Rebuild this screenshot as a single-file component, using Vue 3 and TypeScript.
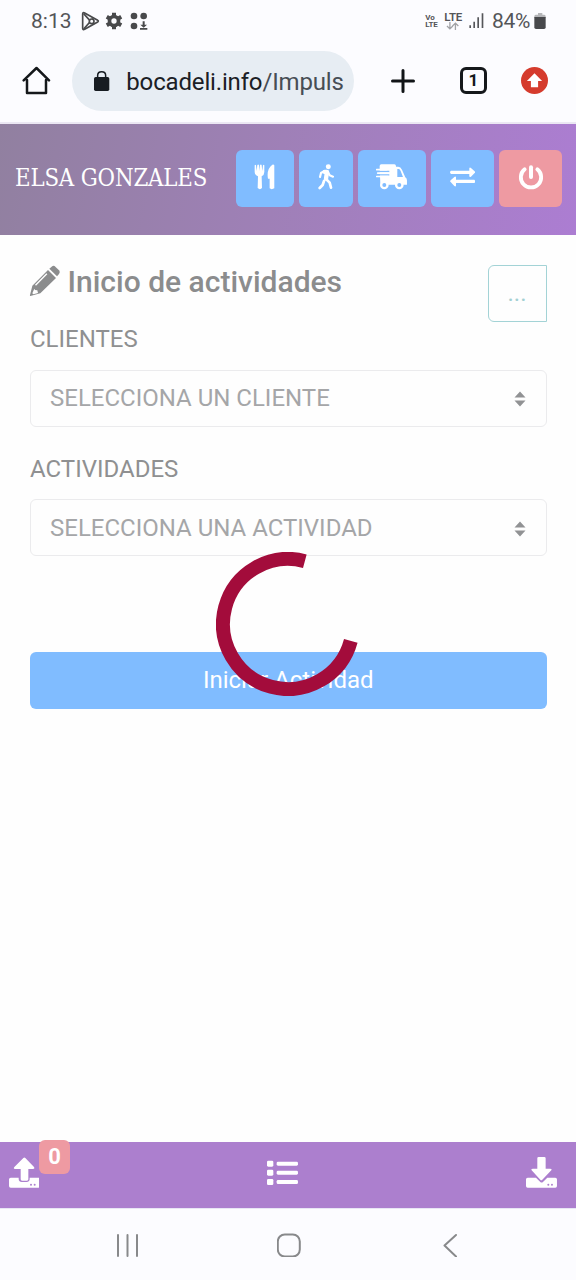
<script setup lang="ts">
import { ref } from 'vue'

interface Field {
  label: string
  placeholder: string
}

const userName = ref('ELSA GONZALES')
const pending = ref(0)
const fields: Field[] = [
  { label: 'CLIENTES', placeholder: 'SELECCIONA UN CLIENTE' },
  { label: 'ACTIVIDADES', placeholder: 'SELECCIONA UNA ACTIVIDAD' },
]
</script>

<template>
  <div class="phone">
    <div class="status">
      <span class="clock">8:13</span>
      <svg class="status-left" viewBox="240 30 210 66" width="70" height="22">
        <g fill="none" stroke="#48494b" stroke-width="5" stroke-linejoin="round">
          <path d="M248 42q0-6 6-3l39 22q4 2 0 5l-39 22q-6 3-6-3z" />
          <path d="M251 41l28 31M251 87l28-31" />
          <circle cx="275" cy="64" r="7" fill="#fcfcff" />
        </g>
        <g fill="none" stroke="#48494b">
          <circle cx="342" cy="63" r="13.500" stroke-width="11" />
          <path d="M342 38v10M342 78v10M320.300 50.500l8.700 5M355 70.500l8.700 5M320.300 75.500l8.700-5M355 55.500l8.700-5" stroke-width="12" />
        </g>
        <g fill="#48494b">
          <circle cx="402" cy="48" r="10" />
          <circle cx="431" cy="48" r="10" />
          <circle cx="402" cy="78" r="10" />
          <path d="M428 64h6v10h7l-10 9-10-9h7zM420 84h22v5h-22z" />
        </g>
      </svg>
      <span class="grow"></span>
      <span class="volte"><span>Vo</span><span>LTE</span></span>
      <span class="lte">
        <span>LTE</span>
        <svg viewBox="0 0 40 24" width="13" height="8" fill="none" stroke="#a2a3a6" stroke-width="4">
          <path d="M12 0v20M3 12l9 9 9-9M29 24V4M20 12l9-9 9 9" />
        </svg>
      </span>
      <svg class="signal" viewBox="540 36 50 52" width="16.700" height="17.300" fill="#55565a">
        <path d="M544 76h5v8h-5zM556 65h5v19h-5zM568 52h5v32h-5zM581 40h5v44h-5z" />
      </svg>
      <span class="percent">84%</span>
      <svg class="battery" viewBox="736 36 36 54" width="12" height="18">
        <path d="M748 39h13v5h6q4 0 4 5v5h-34v-5q0-5 4-5h7z" fill="#b5b6b9" />
        <path d="M737 51h34v31q0 5-5 5h-24q-5 0-5-5z" fill="#48494c" />
      </svg>
    </div>

    <div class="browser">
      <svg class="home" viewBox="66 198 87 87" width="29" height="29" fill="none" stroke="#15181b" stroke-width="7.500" stroke-linejoin="round" stroke-linecap="round">
        <path d="M81 240v39h57v-39M71 241l38.500-37L147 241" />
      </svg>
      <div class="pill">
        <svg viewBox="280 208 52 66" width="17.300" height="22">
          <rect x="283" y="229" width="46" height="42" rx="5" fill="#171c21" />
          <path d="M294 231v-7q0-11 12-11t12 11v7" fill="none" stroke="#171c21" stroke-width="4.500" />
        </svg>
        <div class="url">bocadeli.info<span>/Impuls</span></div>
      </div>
      <svg class="plus" viewBox="0 0 24 24" width="24" height="24" stroke="#111417" stroke-width="3" stroke-linecap="round">
        <path d="M1.500 12h21M12 1.500v21" />
      </svg>
      <span class="tabs">1</span>
      <svg class="update" viewBox="0 0 27 27" width="27" height="27">
        <circle cx="13.500" cy="13.500" r="13.500" fill="#d53b2d" />
        <path d="M13.500 6.200l7.600 7.800h-4v6.300H9.900V14h-4z" fill="#fff" />
      </svg>
    </div>

    <header class="top">
      <span class="user">{{ userName }}</span>
      <button class="tool t1">
        <svg viewBox="764 134 64 76" width="21.300" height="25.300" fill="#fff">
          <path d="M766 138q3-3 4 0l2 17 2-18q3-3 5 0l1 18 2-18q3-3 5 0l2 18 2-17q3-3 4 0v20q0 9-8 13l1 35q-6 7-13 0l1-35q-10-4-10-13zM825 138v69q-8 5-14 0v-29h-5q-5-29 13-42 4-2 6 2z" />
        </svg>
      </button>
      <button class="tool t2">
        <svg viewBox="90 134 48 76" width="16" height="25.300" fill="none" stroke="#fff" stroke-linecap="round" stroke-linejoin="round">
          <circle cx="121" cy="142" r="7.500" fill="#fff" stroke="none" />
          <path d="M110 158h7l-3 20" stroke-width="13" />
          <path d="M107 156l-8 5-3 12M120 158l5 10 10 4" stroke-width="6.500" />
          <path d="M108 185l-4 12-9 9M114 179l11 11 4 15" stroke-width="8" />
        </svg>
      </button>
      <button class="tool t3">
        <svg viewBox="266 134 94 76" width="31.300" height="25.300">
          <path d="M277 149v-9q0-5 5-5h39q5 0 5 5v2h7q7 0 11 9l10 23q5 3 5 9v13h-75q-5 0-5-5z" fill="#fff" />
          <path d="M330 149h4q4 0 6 6l7 18h-17z" fill="#80bcff" />
          <path d="M264 156.500h42M264 166.500h42" stroke="#80bcff" stroke-width="4" />
          <path d="M264 176h10" stroke="#80bcff" stroke-width="5" />
          <path d="M268 151h30M271 161.500h34M268 171.500h34" stroke="#fff" stroke-width="5" stroke-linecap="round" />
          <g fill="#80bcff" stroke="#fff" stroke-width="7">
            <circle cx="291" cy="197" r="9.500" /><circle cx="336" cy="197" r="9.500" />
          </g>
        </svg>
      </button>
      <button class="tool t4">
        <svg viewBox="486 142 76 60" width="25.300" height="20" fill="#fff">
          <path d="M489 153h55v-7q1-4 5-1l11 10q3 3 0 5l-11 11q-4 3-5-1v-7h-55q-6-5 0-10zM559 180h-55v-7q-1-4-5-1l-11 10q-3 3 0 5l11 12q4 3 5-1v-8h55q6-5 0-10z" />
        </svg>
      </button>
      <button class="tool t5 danger">
        <svg viewBox="688 132 78 78" width="26" height="26" fill="none" stroke="#fff" stroke-linecap="round">
          <path d="M708 148a30.500 30.500 0 1 0 38 0" stroke-width="11.500" />
          <path d="M727 142v29" stroke-width="12" />
        </svg>
      </button>
    </header>

    <main class="content">
      <div class="title-row">
        <svg class="pencil" viewBox="88 74 96 96" width="32" height="32" fill="#8b8c8d">
          <path fill-rule="evenodd" d="M98 136l47-47 24 24-47 46-30 8q-2 0-1-3zM104 145l-6 14 3 3 14-4-2-8-7-1zM109 136l34-34-3-3-34 34z" />
          <path d="M149 85l7-6q6-5 11 0l11 11q5 5 0 11l-6 7z" />
        </svg>
        <h5>Inicio de actividades</h5>
        <button class="more">...</button>
      </div>
      <div v-for="f in fields" :key="f.label" class="field">
        <label>{{ f.label }}</label>
        <div class="select">
          <span>{{ f.placeholder }}</span>
          <svg viewBox="0 0 12 16" width="12" height="16" fill="#919294">
            <path d="M6 .5L11.500 6.500H.5zM6 15.500L.5 9.500h11z" />
          </svg>
        </div>
      </div>
      <button class="start">Iniciar Actividad</button>
    </main>

    <footer class="bottom">
      <div class="upload">
        <svg viewBox="26 82 92 94" width="30.700" height="31.300" fill="#fff">
          <path d="M31 144h24v5q1 8 9 8h15q8 0 9-8v-5h25q5 0 5 5v20q0 5-5 5H31q-5 0-5-5v-20q0-5 5-5z" />
          <path d="M69 85q3-3 6 0l26 27q3 6-3 6H84v31q0 4-4 4H65q-4 0-4-4v-31H44q-6 0-2-6z" />
          <circle cx="92" cy="165" r="3" fill="#ac7fce" /><circle cx="103" cy="165" r="3" fill="#ac7fce" />
        </svg>
        <span class="badge">{{ pending }}</span>
      </div>
      <svg viewBox="802 90 94 76" width="31.300" height="25.300" fill="#fff">
        <g v-for="y in [92, 119, 147]" :key="y">
          <rect x="802" :y="y" width="19" height="18" rx="4" />
          <rect x="831" :y="y + 3" width="64" height="12" rx="4" />
        </g>
      </svg>
      <svg viewBox="618 82 94 94" width="31.300" height="31.300" fill="#fff">
        <path d="M623 144h25l13 13q4 3 8 0l13-13h24q5 0 5 5v20q0 5-5 5h-83q-5 0-5-5v-20q0-5 5-5z" />
        <path d="M656 82h17q4 0 4 4v31h14q6 0 3 5l-27 28q-3 3-6 0l-26-28q-3-5 3-5h14V86q0-4 4-4z" />
        <circle cx="685" cy="165" r="3" fill="#ac7fce" /><circle cx="696" cy="165" r="3" fill="#ac7fce" />
      </svg>
    </footer>

    <nav class="system">
      <svg viewBox="0 0 24 24" width="24" height="24" stroke="#88898b" stroke-width="2" stroke-linecap="round">
        <path d="M3 2v21M12.500 2v21M22 2v21" />
      </svg>
      <svg viewBox="0 0 24 24" width="24" height="24" fill="none" stroke="#88898b" stroke-width="2">
        <rect x="0.800" y="1.500" width="22" height="22" rx="7" />
      </svg>
      <svg viewBox="0 0 24 24" width="24" height="24" fill="none" stroke="#88898b" stroke-width="2" stroke-linecap="round" stroke-linejoin="round">
        <path d="M18 2L6.500 12.500 18 23.500" />
      </svg>
    </nav>

    <svg class="spinner" viewBox="-72 -72 144 144" width="144" height="144" fill="none" stroke="#a30c3b" stroke-width="14">
      <path d="M16.820-62.790A65 65 0 1 0 62.790 16.820" />
    </svg>
  </div>
</template>

<style>
body {
  margin: 0;
  background: #fff;
}
</style>

<style scoped>
.phone {
  position: relative;
  width: 576px;
  height: 1280px;
  display: flex;
  flex-direction: column;
  overflow: hidden;
  background: #fefefe;
  font-family: Roboto, "Liberation Sans", sans-serif;
  font-size: 24px;
}
svg {
  flex: none;
  display: block;
}
button {
  font-family: inherit;
  padding: 0;
  border: 0;
}
.status {
  height: 42px;
  box-sizing: border-box;
  display: flex;
  align-items: center;
  padding: 0 30px 0 31px;
  background: #fcfcff;
  color: #545558;
}
.clock {
  width: 49px;
  font-size: 21px;
}
.grow {
  flex: 1;
}
.volte {
  display: flex;
  flex-direction: column;
  width: 19px;
  font-size: 8px;
  letter-spacing: -0.2px;
  line-height: 7px;
  font-weight: 700;
}
.lte {
  display: flex;
  flex-direction: column;
  width: 24px;
  font-size: 11.500px;
  letter-spacing: -0.2px;
  line-height: 10px;
  font-weight: 600;
}
.lte svg {
  margin-left: 2px;
}
.signal {
  margin-right: 7px;
}
.percent {
  width: 41.500px;
  font-size: 21px;
  letter-spacing: -0.3px;
  white-space: nowrap;
}
.battery {
  margin-right: 0.5px;
}
.browser {
  height: 82px;
  box-sizing: border-box;
  display: flex;
  align-items: center;
  padding: 0 28px 3px 22px;
  background: #fcfcff;
  border-bottom: 2px solid #ebe7f3;
}
.pill {
  display: flex;
  align-items: center;
  width: 282px;
  height: 60px;
  box-sizing: border-box;
  margin-left: 21px;
  padding: 0 10px 0 21px;
  border-radius: 30px;
  background: #e7edf3;
}
.url {
  flex: 1;
  margin-left: 16px;
  overflow: hidden;
  white-space: nowrap;
  line-height: 34px;
  padding-top: 2px;
  font-size: 24px;
  letter-spacing: -0.16px;
  color: #1b2025;
}
.url span {
  color: #474e55;
}
.plus {
  margin-left: 37px;
}
.tabs {
  width: 27px;
  height: 27px;
  box-sizing: border-box;
  margin-left: 45px;
  border: 3px solid #15181b;
  border-radius: 6px;
  text-align: center;
  font-size: 17px;
  line-height: 21px;
  font-weight: 700;
  color: #15181b;
}
.update {
  margin-left: auto;
}
.top {
  height: 111px;
  box-sizing: border-box;
  display: flex;
  align-items: center;
  padding: 0 14px 2px 15px;
  background: linear-gradient(100deg, #9180a0 0%, #9f80b7 48%, #ac7dd2 100%);
}
.user {
  width: 221px;
  font-family: "DejaVu Serif Condensed", "DejaVu Serif", serif;
  font-stretch: condensed;
  font-size: 23.700px;
  line-height: 32px;
  padding-bottom: 1px;
  letter-spacing: -0.15px;
  white-space: nowrap;
  color: #fff;
}
.tool {
  display: flex;
  align-items: center;
  justify-content: center;
  flex: none;
  height: 57px;
  padding-bottom: 3px;
  border-radius: 6px;
  background: #80bcff;
}
.t1 { width: 58px; }
.t2 { width: 54px; margin-left: 5px; }
.t3 { width: 68px; margin-left: 5px; }
.t4 { width: 63px; margin-left: 5px; }
.t5 { width: 63px; margin-left: 5px; }
.danger {
  background: #ee9aa2;
}
.content {
  flex: 1;
  padding: 29.500px 29.500px 0 30px;
}
.title-row {
  display: flex;
  height: 57px;
  margin-bottom: 2px;
}
.pencil {
  margin: 0 6.500px 0 -1px;
}
h5 {
  flex: 1;
  margin: 0;
  font-size: 30px;
  line-height: 34px;
  font-weight: 500;
  color: #8b8c8d;
}
.more {
  width: 59px;
  height: 57px;
  box-sizing: border-box;
  border: 1px solid #a3d3d6;
  border-radius: 6px 0 0 6px;
  background: none;
  font-size: 24px;
  color: #a3d0d3;
}
.field {
  margin-bottom: 26.500px;
}
.field label {
  display: block;
  height: 46px;
  line-height: 31px;
  color: #8f9091;
}
.field + .field label {
  line-height: 32px;
}
.select {
  display: flex;
  align-items: center;
  justify-content: space-between;
  height: 57px;
  box-sizing: border-box;
  padding: 0 20px 0 19px;
  border: 1px solid #ebebed;
  border-radius: 6px;
  color: #a5a6a8;
}
.select svg {
  margin-top: 2px;
}
.start {
  display: block;
  width: 100%;
  height: 57px;
  margin-top: 96px;
  padding-bottom: 2px;
  border-radius: 6px;
  background: #80bcff;
  color: #fff;
  font-size: 24px;
}
.bottom {
  height: 66px;
  box-sizing: border-box;
  display: flex;
  align-items: center;
  justify-content: space-between;
  padding: 0 18.500px 4px 8.500px;
  background: #ac7fce;
}
.upload {
  position: relative;
}
.badge {
  position: absolute;
  left: 30.500px;
  top: -17.500px;
  width: 31px;
  height: 34px;
  border-radius: 6px;
  background: #ee9aa2;
  color: #fff;
  text-align: center;
  font-size: 22px;
  line-height: 33px;
  font-weight: 700;
}
.system {
  height: 72px;
  box-sizing: border-box;
  display: flex;
  justify-content: space-between;
  padding: 24px 114px 0 115px;
  background: #fcfcff;
  border-top: 1px solid #e8e6f5;
}
.spinner {
  position: absolute;
  left: 216px;
  top: 552px;
}
</style>
